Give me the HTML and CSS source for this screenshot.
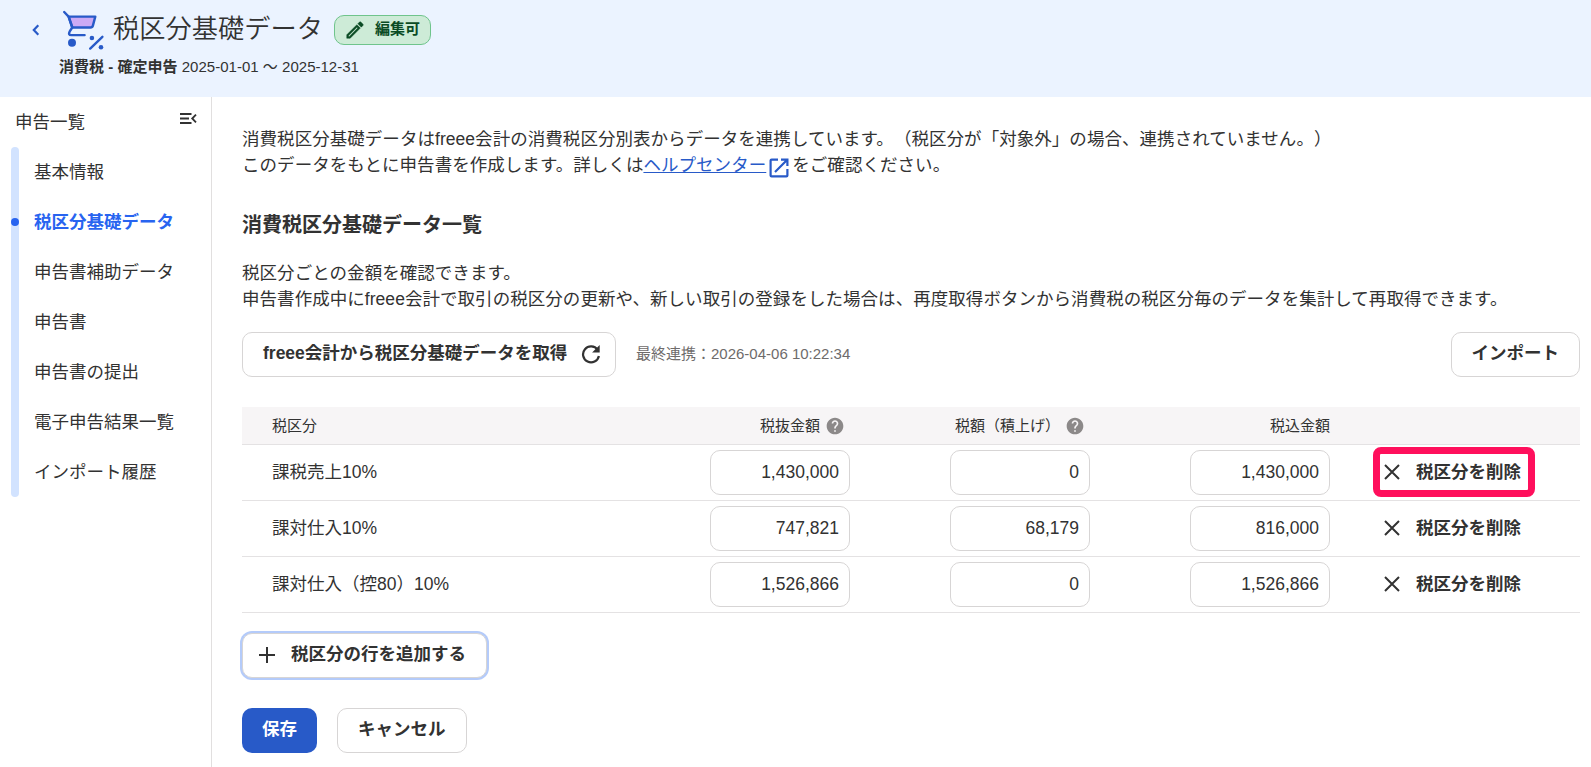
FILE: index.html
```html
<!DOCTYPE html>
<html lang="ja">
<head>
    <meta charset="UTF-8">
    <title>税区分基礎データ</title>
    <link rel="stylesheet" href="styles.css">
</head>
<body>
    <header class="page-header">
        <div class="title-row">
            <a class="back" href="#">
                <svg width="8" height="12" viewBox="0 0 8 12"><path d="M6.3 1.2 1.8 6l4.5 4.8" fill="none" stroke="currentColor" stroke-width="2.2"/></svg>
            </a>
            <svg class="cart" width="42" height="42" viewBox="0 0 42 42" fill="none" stroke="#285ac8" stroke-width="2.4" stroke-linecap="round" stroke-linejoin="round">
                <path d="M5.6 6.6H32.3l-2.4 9q-.5 1.9-2.4 1.9H9.4z" fill="#ccaaf5"/>
                <path d="M1.2 2 5.6 6.6l3.6 10.9-2.6 4.2q-1.6 3.4 1.6 3.4h13.4"/>
                <path d="M27.2 38.6 39.4 26.8"/>
                <circle cx="9" cy="32.7" r="4" fill="#285ac8" stroke="none"/>
                <circle cx="28.9" cy="28" r="2.3" fill="#285ac8" stroke="none"/>
                <circle cx="38" cy="37.3" r="2.3" fill="#285ac8" stroke="none"/>
            </svg>
            <h1>税区分基礎データ</h1>
            <span class="badge">
                <svg width="22" height="22" viewBox="0 0 24 24" fill="currentColor"><path d="M14.06 9.02l.92.92L5.92 19H5v-.92l9.06-9.06M17.66 3c-.25 0-.51.1-.7.29l-1.83 1.83 3.75 3.75 1.83-1.83c.39-.39.39-1.02 0-1.41l-2.34-2.34c-.2-.2-.45-.29-.71-.29zm-3.6 3.19L3 17.25V21h3.75L17.81 9.94l-3.75-3.75z" stroke="currentColor" stroke-width=".5"/></svg>
                <span>編集可</span>
            </span>
        </div>
        <p class="period"><b>消費税 - 確定申告</b> 2025-01-01 〜 2025-12-31</p>
    </header>

    <div class="layout">
        <nav class="sidebar">
            <div class="sidebar-head">
                <span>申告一覧</span>
                <svg width="17" height="12" viewBox="0 0 17 12" fill="none" stroke="currentColor" stroke-width="1.8"><path d="M0 1h11.5M0 5.5h9M0 10h11.5M16 1.6l-3.8 3.9L16 9.4"/></svg>
            </div>
            <ul class="menu">
                <li>基本情報</li>
                <li class="active">税区分基礎データ</li>
                <li>申告書補助データ</li>
                <li>申告書</li>
                <li>申告書の提出</li>
                <li>電子申告結果一覧</li>
                <li>インポート履歴</li>
            </ul>
        </nav>

        <main class="content">
            <p>消費税区分基礎データはfreee会計の消費税区分別表からデータを連携しています。（税区分が「対象外」の場合、連携されていません。）<br>このデータをもとに申告書を作成します。詳しくは<a class="help-link" href="#">ヘルプセンター</a><svg class="external" width="20" height="20" viewBox="0 0 20 20" fill="none" stroke="#285ac8" stroke-width="2.2"><path d="M9 1.6H2.6q-1 0-1 1v14.8q0 1 1 1h14.8q1 0 1-1V11M12 1.6h6.4V8M18 2 6 14"/></svg>をご確認ください。</p>

            <h2>消費税区分基礎データ一覧</h2>
            <p>税区分ごとの金額を確認できます。<br>申告書作成中にfreee会計で取引の税区分の更新や、新しい取引の登録をした場合は、再度取得ボタンから消費税の税区分毎のデータを集計して再取得できます。</p>

            <div class="toolbar">
                <button class="btn btn-fetch">
                    <span>freee会計から税区分基礎データを取得</span>
                    <svg class="reload" width="20" height="20" viewBox="0 0 20 20"><path d="M16.6 5.8A8 8 0 1 0 17.9 12" fill="none" stroke="currentColor" stroke-width="2.2"/><path d="M18.7 1v7.6h-7.6z" fill="currentColor"/></svg>
                </button>
                <span class="synced">最終連携：2026-04-06 10:22:34</span>
                <button class="btn"><span>インポート</span></button>
            </div>

            <table class="tax-table">
                <thead>
                    <tr>
                        <th class="col-name">税区分</th>
                        <th class="col-num">税抜金額<svg class="help" width="20" height="20" viewBox="0 0 24 24"><path d="M12 2C6.48 2 2 6.48 2 12s4.48 10 10 10 10-4.48 10-10S17.52 2 12 2zm1 17h-2v-2h2v2zm2.07-7.75l-.9.92C13.45 12.9 13 13.5 13 15h-2v-.5c0-1.1.45-2.1 1.17-2.83l1.24-1.26c.37-.36.59-.86.59-1.41 0-1.1-.9-2-2-2s-2 .9-2 2H8c0-2.21 1.79-4 4-4s4 1.79 4 4c0 .88-.36 1.68-.93 2.25z"/></svg></th>
                        <th class="col-num">税額（積上げ）<svg class="help" width="20" height="20" viewBox="0 0 24 24"><path d="M12 2C6.48 2 2 6.48 2 12s4.48 10 10 10 10-4.48 10-10S17.52 2 12 2zm1 17h-2v-2h2v2zm2.07-7.75l-.9.92C13.45 12.9 13 13.5 13 15h-2v-.5c0-1.1.45-2.1 1.17-2.83l1.24-1.26c.37-.36.59-.86.59-1.41 0-1.1-.9-2-2-2s-2 .9-2 2H8c0-2.21 1.79-4 4-4s4 1.79 4 4c0 .88-.36 1.68-.93 2.25z"/></svg></th>
                        <th class="col-num">税込金額</th>
                        <th class="col-action"></th>
                    </tr>
                </thead>
                <tbody>
                    <tr>
                        <td class="col-name">課税売上10%</td>
                        <td class="col-num"><input type="text" value="1,430,000"></td>
                        <td class="col-num"><input type="text" value="0"></td>
                        <td class="col-num"><input type="text" value="1,430,000"></td>
                        <td class="col-action"><button class="delete highlighted"><svg width="16" height="16" viewBox="0 0 16 16"><path d="M1 1l14 14M15 1 1 15" stroke="currentColor" stroke-width="2"/></svg><span>税区分を削除</span></button></td>
                    </tr>
                    <tr>
                        <td class="col-name">課対仕入10%</td>
                        <td class="col-num"><input type="text" value="747,821"></td>
                        <td class="col-num"><input type="text" value="68,179"></td>
                        <td class="col-num"><input type="text" value="816,000"></td>
                        <td class="col-action"><button class="delete"><svg width="16" height="16" viewBox="0 0 16 16"><path d="M1 1l14 14M15 1 1 15" stroke="currentColor" stroke-width="2"/></svg><span>税区分を削除</span></button></td>
                    </tr>
                    <tr>
                        <td class="col-name">課対仕入（控80）10%</td>
                        <td class="col-num"><input type="text" value="1,526,866"></td>
                        <td class="col-num"><input type="text" value="0"></td>
                        <td class="col-num"><input type="text" value="1,526,866"></td>
                        <td class="col-action"><button class="delete"><svg width="16" height="16" viewBox="0 0 16 16"><path d="M1 1l14 14M15 1 1 15" stroke="currentColor" stroke-width="2"/></svg><span>税区分を削除</span></button></td>
                    </tr>
                </tbody>
            </table>

            <button class="btn btn-add">
                <svg width="16" height="16" viewBox="0 0 16 16"><path d="M8 0v16M0 8h16" stroke="currentColor" stroke-width="2"/></svg>
                <span>税区分の行を追加する</span>
            </button>

            <div class="form-actions">
                <button class="btn btn-primary"><span>保存</span></button>
                <button class="btn"><span>キャンセル</span></button>
            </div>
        </main>
    </div>
</body>
</html>
```

FILE: styles.css
```css
* {
    box-sizing: border-box;
}
body {
    margin: 0;
    height: 767px;
    overflow: hidden;
    background-color: #fff;
    color: #323232;
    font-family: "Liberation Sans", "Noto Sans CJK JP", sans-serif;
    font-size: 17.5px;
    line-height: 1.5;
    text-spacing-trim: space-all;
}
h1, h2, p, ul {
    margin: 0;
    padding: 0;
}
svg {
    flex-shrink: 0;
}
button, input {
    font: inherit;
    color: inherit;
}

/* header */
.page-header {
    height: 97px;
    padding: 9px 0 0 32px;
    background-color: #ebf3ff;
}
.title-row {
    display: flex;
    align-items: center;
    height: 42px;
}
.back {
    display: flex;
    width: 31px;
    margin-top: -1px;
    color: #285ac8;
}
.cart {
    margin-top: 2px;
}
h1 {
    margin: -2px 0 0 8px;
    font-size: 26.25px;
    font-weight: 350;
    line-height: 40px;
}
.badge {
    display: flex;
    align-items: center;
    gap: 9px;
    height: 30px;
    margin-left: 11px;
    padding: 0 10px 0 9px;
    border: 1px solid #6fc48c;
    border-radius: 10px;
    background-color: #cdebd7;
    color: #0a4b24;
    font-size: 15px;
    font-weight: bold;
}
.badge span {
    margin-bottom: 2px;
}
.period {
    margin: 5px 0 0 27px;
    font-size: 15px;
    line-height: 22.5px;
    letter-spacing: 0.02px;
}

.layout {
    display: flex;
    height: 670px;
}

/* sidebar */
.sidebar {
    width: 212px;
    padding: 12px 0 0 11px;
    border-right: 1px solid #e1dfdf;
}
.sidebar-head {
    display: flex;
    justify-content: space-between;
    padding: 0 14px 0 4px;
}
.sidebar-head svg {
    margin-top: 4px;
}
.menu {
    position: relative;
    margin-top: 12px;
    padding-left: 23px;
    list-style: none;
}
.menu::before {
    content: "";
    position: absolute;
    top: 0;
    bottom: 0;
    left: 0;
    width: 8px;
    border-radius: 4px;
    background-color: #d2e3ff;
}
.menu li {
    height: 50px;
    line-height: 50px;
}
.menu .active {
    position: relative;
    color: #2864f0;
    font-weight: bold;
}
.menu .active::before {
    content: "";
    position: absolute;
    top: 21px;
    left: -23px;
    width: 8px;
    height: 8px;
    border-radius: 50%;
    background-color: #2864f0;
}

/* main */
.content {
    flex: 1;
    padding: 29px 11px 0 30px;
}
.content p {
    line-height: 26.25px;
    letter-spacing: 0.045px;
    white-space: nowrap;
}
.help-link {
    color: #285ac8;
}
.external {
    margin: 0 3px;
    vertical-align: -7px;
}
h2 {
    margin: 31px 0 20px;
    font-size: 20px;
    line-height: 30px;
}
.toolbar {
    display: flex;
    align-items: center;
    margin-top: 20px;
}
.btn {
    display: flex;
    align-items: center;
    height: 45px;
    padding: 0 20px;
    border: 1px solid #d7d5d5;
    border-radius: 10px;
    background-color: #fff;
    font-weight: bold;
    white-space: nowrap;
}
.btn span {
    margin-bottom: 2px;
}
.btn-fetch {
    width: 374px;
}
.reload {
    margin: -2px 0 0 14px;
}
.synced {
    margin: 0 auto 0 20px;
    color: #6e6b6b;
    font-size: 15px;
}

/* table */
.tax-table {
    width: 1338px;
    margin-top: 30px;
    border-collapse: separate;
    border-spacing: 0;
    table-layout: fixed;
}
.tax-table th {
    height: 38px;
    padding: 2px 0 0;
    border-bottom: 1px solid #e4e2e3;
    background-color: #f7f5f6;
    font-size: 15px;
    font-weight: normal;
}
.tax-table td {
    height: 56px;
    padding: 0;
    border-bottom: 1px solid #e4e2e3;
}
.tax-table .col-name {
    padding-left: 30px;
    text-align: left;
}
.tax-table .col-num {
    width: 240px;
    text-align: right;
}
.tax-table .col-action {
    width: 250px;
    padding-left: 54px;
}
.help {
    margin: 0 5px;
    fill: #8c8989;
    vertical-align: -5px;
}
.tax-table input {
    display: block;
    width: 140px;
    height: 45px;
    margin-left: auto;
    padding: 0 10px;
    border: 1px solid #d7d5d5;
    border-radius: 10px;
    text-align: right;
}
.delete {
    position: relative;
    display: flex;
    align-items: center;
    gap: 16px;
    height: 45px;
    padding: 0;
    border: 0;
    background: none;
    font-weight: bold;
}
.delete svg,
.btn-add svg {
    margin-top: -2px;
}
.delete span {
    margin-bottom: 1px;
}
.highlighted::after {
    content: "";
    position: absolute;
    inset: -3px -14px -2px -11px;
    border: 7px solid #ff0f5c;
    border-radius: 8px;
}

.btn-add {
    margin-top: 20px;
    gap: 16px;
    padding: 0 20px 0 16px;
    box-shadow: 0 0 0 2px #b4cbfa;
}
.form-actions {
    display: flex;
    gap: 20px;
    margin-top: 30px;
}
.btn-primary {
    border: 0;
    background-color: #285ac8;
    color: #fff;
}
```
